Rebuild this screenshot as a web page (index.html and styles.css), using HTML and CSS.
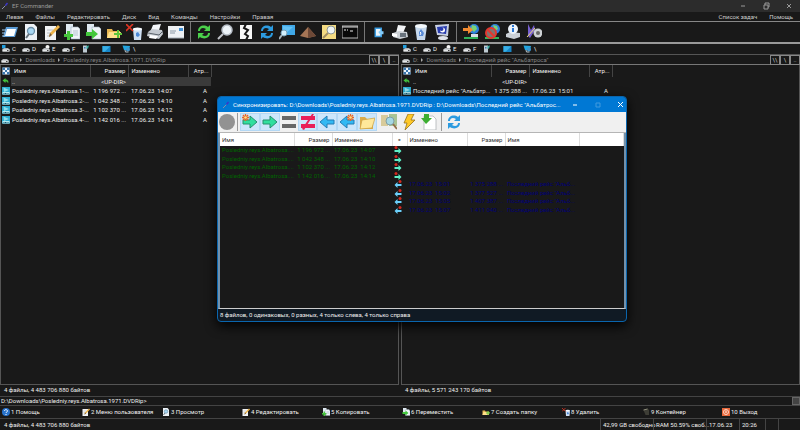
FILE: index.html
```html
<!DOCTYPE html>
<html lang="ru">
<head>
<meta charset="utf-8">
<title>EF Commander</title>
<link rel="stylesheet" href="styles.css">
</head>
<body>
<svg class="defs" aria-hidden="true">
  <symbol id="wand" viewBox="0 0 16 16"><path d="M2 14 9 7" stroke="#8a8fa8" stroke-width="2"/><path d="m9 7 4-5" stroke="#3b35c8" stroke-width="3"/></symbol>
  <symbol id="list" viewBox="0 0 16 16"><path d="M4 3h12l-3 10H1z" fill="#5b9bd5"/><path d="M5 5h9l-2 7H3z" fill="#fff"/><path d="M0 6h4M0 9h3M0 12h3" stroke="#9cc7ef"/></symbol>
  <symbol id="view" viewBox="0 0 16 16"><path d="M2 0h9l3 3v13H2z" fill="#edf2f7"/><circle cx="8" cy="7" r="3.5" fill="#a8d8f4" stroke="#6b8fa8" stroke-width="1.3"/><path d="m6 10-3 4" stroke="#68757f" stroke-width="2"/></symbol>
  <symbol id="edit" viewBox="0 0 16 16"><path d="M1 2h11v14H1z" fill="#f2f4f6"/><path d="M3 6h6M3 9h5M3 12h4" stroke="#b8bfc6"/><path d="m5 13 1-4 8-8 2 2-8 8z" fill="#edb44a"/><path d="m5 13 1-4 2 2z" fill="#72583a"/></symbol>
  <symbol id="copy" viewBox="0 0 16 16"><path d="M2 0h7v11H2z" fill="#dfe9f1"/><path d="M7 3h7l2 2v10H7z" fill="#eff4f8" stroke="#9fb0bf" stroke-width=".6"/><path d="M9 7h5M9 9h5M9 11h5" stroke="#b6c5d0"/><path d="M3 7h3v3h3v3H6v3H3v-3H0v-3h3z" fill="#46c43c"/></symbol>
  <symbol id="move" viewBox="0 0 16 16"><path d="M2 0h7v11H2z" fill="#dfe9f1"/><path d="M7 3h7l2 2v10H7z" fill="#eff4f8" stroke="#9fb0bf" stroke-width=".6"/><path d="M1 8h6V5l6 5-6 5v-3H1z" fill="#43c83c"/></symbol>
  <symbol id="newdir" viewBox="0 0 16 16"><path d="M1 5h5l1 2h7v7H1z" fill="#e8b651"/><path d="m1 14 2-6h12l-2 6z" fill="#ffe08a"/><path d="M11 6h2v3h3v2h-3v3h-2v-3H8V9h3z" fill="#5fc43c"/></symbol>
  <symbol id="del" viewBox="0 0 16 16"><path d="M7 5h9l-1 11H8z" fill="#cfe0f4"/><ellipse cx="11.500" cy="5" rx="4.500" ry="1.500" fill="#f7fbff"/><path d="m10 9 2-1 2 3-2 2-2-1z" fill="#4d8ad8"/><path d="m0 0 7 7M7 0 0 7" stroke="#dd3322" stroke-width="1.600"/></symbol>
  <symbol id="print" viewBox="0 0 16 16"><path d="m6 1 8-1-2 6H4z" fill="#f4f7fa"/><path d="m1 8 4-3 10 1 1 4-4 5L0 12z" fill="#c6cbd1"/><path d="m1 9 11 2 4-4" stroke="#5d646c" fill="none"/><path d="m3 11 8 1-2 3-7-1z" fill="#fff"/></symbol>
  <symbol id="mail" viewBox="0 0 16 16"><path d="M0 2h16v12H0z" fill="#eef1f4"/><path d="M2 7h6M2 9h5" stroke="#8d9aa6"/><path d="M11 4h4v3h-4z" fill="#4694d8"/><path d="M0 14h16" stroke="#a8b0b8"/></symbol>
  <symbol id="sync" viewBox="0 0 16 16"><path d="M2 7c0-5 6-7 10-4l2-2v6H8l2-2C7 3 4 4 4 7z"/><path d="M14 9c0 5-6 7-10 4l-2 2V9h6l-2 2c3 2 6 1 6-2z"/></symbol>
  <symbol id="find" viewBox="0 0 16 16"><circle cx="10" cy="6" r="5" fill="#edf3f8" stroke="#b7bec7" stroke-width="1.500"/><path d="m6 10-5 5" stroke="#c2c5ca" stroke-width="2"/></symbol>
  <symbol id="split" viewBox="0 0 16 16"><path d="M2 1h12v14H2z" fill="#f7f7f7"/><path d="m8 0-2 4 4 2-3 4 3 2-2 4" fill="none" stroke="#161616" stroke-width="2"/></symbol>
  <symbol id="screen" viewBox="0 0 16 16"><path d="M3 1h13v10H3z" fill="#40a8e8"/><path d="m4 2 10 1-8 7H4z" fill="#64c2f5"/><circle cx="5" cy="9" r="3" fill="#d4effb" stroke="#77a0b8"/><path d="m3 11-3 4" stroke="#a7b5be" stroke-width="2"/></symbol>
  <symbol id="pyramid" viewBox="0 0 16 16"><path d="m8 3 8 9-8 2-8-2z" fill="#a57555"/><path d="m8 3 8 9-8 2z" fill="#6d4937"/></symbol>
  <symbol id="note" viewBox="0 0 16 16"><path d="M1 1h14v14H1z" fill="#f4dc83"/><circle cx="10" cy="6" r="4" fill="#eff5f5" stroke="#8e9897"/><path d="m7 9-5 5" stroke="#a18f65" stroke-width="2"/></symbol>
  <symbol id="cmd" viewBox="0 0 16 16"><path d="M0 2h16v12H0z" fill="#090909" stroke="#b9b9b9"/><path d="M0 3h16" stroke="#ddd"/><path d="M2 6h2M5 6h1M8 7h3" stroke="#eee"/></symbol>
  <symbol id="door" viewBox="0 0 16 16"><path d="M2 2h10v13H2z" fill="#3b9de1"/><path d="M4 4h6v9H4z" fill="#e9f5fd"/><path d="m7 8 4-3v2h3v4h-3v2z" fill="#84cbf8"/></symbol>
  <symbol id="fax" viewBox="0 0 16 16"><path d="m6 1 8 1-3 7H4z" fill="#f3f5f7"/><path d="m1 9 6-2 8 1 1 5-8 2-7-2z" fill="#ccd1d6"/><path d="M8 9h6v4H8z" fill="#69737d"/><path d="m0 9 5 1v3l-5-1z" fill="#fff"/></symbol>
  <symbol id="bin" viewBox="0 0 16 16"><path d="M2 2h12l-2 14H4z" fill="#c6d9ee"/><ellipse cx="8" cy="2" rx="6" ry="2" fill="#f4f9fd"/><path d="m6 8 2-3 3 4-1 3H6z" fill="#588bd7"/><path d="m7 8 1 1-1 2" stroke="#fff" fill="none"/></symbol>
  <symbol id="monitor" viewBox="0 0 16 16"><path d="m1 1 14-1-1 12-11-1z" fill="#c9d1e3"/><path d="m3 3 10-1-1 8-8-1z" fill="#283cae"/><circle cx="8.500" cy="6" r="2.500" fill="#fff"/><circle cx="7.500" cy="5" r="2" fill="#283cae"/><ellipse cx="9" cy="14" rx="5" ry="2" fill="#dfe3eb"/></symbol>
  <symbol id="net" viewBox="0 0 16 16"><circle cx="11" cy="5" r="5" fill="#2d80dc"/><path d="m9 1 4 1 1 3-3 3-3-3z" fill="#79d276"/><path d="M8 10h7v3H8z" fill="#d8dee7"/><path d="M0 4h5V1l5 5-5 4V7H0z" fill="#f28b31"/><path d="M1 14h14" stroke="#32b45a" stroke-width="2"/></symbol>
  <symbol id="nonet" viewBox="0 0 16 16"><circle cx="11" cy="5" r="5" fill="#2d80dc"/><path d="m9 1 4 1 1 3-3 2z" fill="#79d276"/><path d="M1 14h14" stroke="#32b45a" stroke-width="2"/><circle cx="7" cy="9" r="5" fill="#81736f" stroke="#e4372e" stroke-width="2"/><path d="m4 6 6 6" stroke="#e4372e" stroke-width="2"/></symbol>
  <symbol id="info" viewBox="0 0 16 16"><path d="m1 10 4-2 10 1v4l-6 2-8-2z" fill="#cbd0d6"/><circle cx="8" cy="5" r="5" fill="#edf3fa"/><path d="M8 4v4M8 1v2" stroke="#2874cf" stroke-width="2"/></symbol>
  <symbol id="sound" viewBox="0 0 16 16"><path d="m2 0 3 6 3-5 1 5-5 8-2-2z" fill="#7860d2"/><path d="m1 13 8-9" stroke="#efdf75"/><circle cx="12" cy="9" r="4.500" fill="#cdd1d4"/><circle cx="12" cy="9" r="2" fill="#666"/></symbol>
  <symbol id="drive" viewBox="0 0 16 16"><path d="m1 9 3-3h8l3 3v4H1z" fill="#aeb2b5"/><path d="M1 9h14v4H1z" fill="#e5e7e8"/><path d="M10 11h3" stroke="#444" stroke-width="2"/></symbol>
  <symbol id="winflag" viewBox="0 0 16 16"><path d="M0 0h7v7H0z" fill="#229fdf"/></symbol>
  <symbol id="disc" viewBox="0 0 16 16"><circle cx="11" cy="4" r="4" fill="#f5f5f5"/></symbol>
  <symbol id="tools" viewBox="0 0 16 16"><path d="M2 1h8v14H2z" fill="#bfcbd2"/><path d="m9 2 5-1-2 6-3 1z" fill="#37ada0"/><path d="M4 4h3v3H4z" fill="#3978b4"/></symbol>
  <symbol id="desk" viewBox="0 0 16 16"><path d="M0 2h16v12H0z" fill="#1685c7"/><path d="m0 2 15 1-10 10-5 1z" fill="#39afe5"/></symbol>
  <symbol id="lan" viewBox="0 0 16 16"><path d="m0 1 15 1-2 9-10-1z" fill="#22a5df"/><circle cx="11" cy="9" r="4" fill="#3e94cb"/><path d="m5 10 1 4h6" stroke="#b5c0c7" stroke-width="2" fill="none"/></symbol>
  <symbol id="grid" viewBox="0 0 16 16"><path d="M1 1h14v14H1z" fill="#eaf3fc"/><path d="M1 1h5v5H1zM10 1h5v5h-5zM1 10h5v5H1zM10 10h5v5h-5zM6 6h4v4H6z" fill="#3c78ae"/></symbol>
  <symbol id="up" viewBox="0 0 16 16"><path d="m1 5 6-5v3c5 0 7 4 5 8-1-3-2-4-5-4v3z" fill="#43bf3d"/></symbol>
  <symbol id="video" viewBox="0 0 16 16"><path d="M0 0h16v15H0z" fill="#2cabd0"/><path d="m3 1 11 5-10 4z" fill="#8fdeeb"/><path d="M1 10h14v5H1z" fill="#b5ebf2"/><path d="M3 13h10" stroke="#155c78" stroke-width="2" stroke-dasharray="2 1"/></symbol>
  <symbol id="right" viewBox="0 0 16 16"><path d="M1 6h7V2l7 6-7 6v-4H1z" fill="#31df9e" stroke="#27906e"/></symbol>
  <symbol id="left" viewBox="0 0 16 16"><path d="M15 6H8V2L1 8l7 6v-4h7z" fill="#32b9f3" stroke="#237db6"/></symbol>
  <symbol id="star" viewBox="0 0 16 16"><path d="M4 0v8M0 4h8M1 1l6 6M7 1 1 7" stroke="#e96627" stroke-width="1.500"/><circle cx="4" cy="4" r="1.500" fill="#ffe183"/></symbol>
  <symbol id="goright" viewBox="0 0 16 16"><path d="M1 8h8V4l6 6-6 6v-4H1z" fill="#5ff0c8"/><circle cx="4" cy="3" r="3" fill="#d42a20"/></symbol>
  <symbol id="goleft" viewBox="0 0 16 16"><path d="M15 8H7V4l-6 6 6 6v-4h8z" fill="#6cd0fb"/><circle cx="12" cy="3" r="3" fill="#d42a20"/></symbol>
  <symbol id="equal" viewBox="0 0 16 16"><path d="M1 2h14v4H1zM1 10h14v4H1z" fill="#676767"/></symbol>
  <symbol id="unequal" viewBox="0 0 16 16"><path d="M1 2h14v4H1zM1 10h14v4H1zM2 15 12 0h2L4 16z" fill="#e91e58"/></symbol>
  <symbol id="folder" viewBox="0 0 16 16"><path d="M1 3h5l2 2h6v10H1z" fill="#dbac4c"/><path d="m3 6 13-2-3 10-12 1z" fill="#ffe89a" stroke="#c99d3e" stroke-width=".7"/></symbol>
  <symbol id="compare" viewBox="0 0 16 16"><path d="M0 1h7v11H0z" fill="#d8cb9b"/><path d="M8 0h8v12H8z" fill="#a9c495"/><circle cx="9" cy="7" r="4" fill="#a5d8e4" stroke="#809fa7"/><path d="m12 10 4 5" stroke="#93714b" stroke-width="2"/></symbol>
  <symbol id="bolt" viewBox="0 0 16 16"><path d="M7 0h6l-3 6h4L4 16l2-7H3z" fill="#ffc928" stroke="#94711c" stroke-width=".8"/></symbol>
  <symbol id="import" viewBox="0 0 16 16"><path d="M3 2h9l3 3v11H3z" fill="#fff" stroke="#aeb2b5" stroke-width=".8"/><path d="M3 0h5v4h3L5 10 0 4h3z" fill="#3cae31"/></symbol>
  <symbol id="help" viewBox="0 0 16 16"><circle cx="8" cy="8" r="8" fill="#2873cd"/><path d="M5 6c0-4 6-3 6 0 0 2-3 2-3 4M8 12v2" stroke="#fff" stroke-width="2" fill="none"/></symbol>
  <symbol id="box" viewBox="0 0 16 16"><path d="m3 4 8-3 3 3v10H7z" fill="#3e3e36"/><path d="m3 4 8-2" stroke="#8c8b79" stroke-width="2"/></symbol>
  <symbol id="power" viewBox="0 0 16 16"><path d="M0 0h16v16H0z" fill="#e7683b"/><circle cx="8" cy="8" r="5" stroke="#ffd5c6" stroke-width="2" fill="none"/><path d="M8 5v5" stroke="#fff" stroke-width="2"/></symbol>
</svg>

<header class="titlebar">
  <svg class="i8"><use href="#wand"/></svg><span>EF Commander</span>
  <div class="winbtns">
    <button aria-label="Свернуть"><svg viewBox="0 0 8 8"><path d="M2 4h4"/></svg></button>
    <button aria-label="Восстановить"><svg viewBox="0 0 8 8"><path d="M2 3h4v4H2zM3 3V1h4v4H6"/></svg></button>
    <button aria-label="Закрыть"><svg viewBox="0 0 8 8"><path d="m2 2 4 4M6 2 2 6"/></svg></button>
  </div>
</header>
<nav class="menu">
  <button>Левая</button><button>Файлы</button><button>Редактировать</button><button>Диск</button><button>Вид</button><button>Команды</button><button>Настройки</button><button>Правая</button>
  <button class="push">Список задач</button><button>Помощь</button>
</nav>
<div class="toolbar">
  <div class="group g9">
    <button aria-label="Список"><svg><use href="#list"/></svg></button><button aria-label="Просмотр"><svg><use href="#view"/></svg></button><button aria-label="Правка"><svg><use href="#edit"/></svg></button><button aria-label="Копировать"><svg><use href="#copy"/></svg></button><button aria-label="Переместить"><svg><use href="#move"/></svg></button><button aria-label="Создать папку"><svg><use href="#newdir"/></svg></button><button aria-label="Удалить"><svg><use href="#del"/></svg></button><button aria-label="Печать"><svg><use href="#print"/></svg></button><button aria-label="Почта"><svg><use href="#mail"/></svg></button>
  </div>
  <div class="group g8">
    <button aria-label="Обновить" class="green"><svg><use href="#sync"/></svg></button><button aria-label="Найти"><svg><use href="#find"/></svg></button><button aria-label="Разделить"><svg><use href="#split"/></svg></button><button aria-label="Синхронизировать" class="blue"><svg><use href="#sync"/></svg></button><button aria-label="Экран"><svg><use href="#screen"/></svg></button><button aria-label="Архив"><svg><use href="#pyramid"/></svg></button><button aria-label="Искать в файлах"><svg><use href="#note"/></svg></button><button aria-label="Командная строка"><svg><use href="#cmd"/></svg></button>
  </div>
  <div class="group g4">
    <button aria-label="Панель управления"><svg class="small"><use href="#door"/></svg></button><button aria-label="Принтеры"><svg><use href="#fax"/></svg></button><button aria-label="Корзина"><svg><use href="#bin"/></svg></button><button aria-label="Компьютер"><svg><use href="#monitor"/></svg></button>
  </div>
  <div class="group g4">
    <button aria-label="Подключить"><svg><use href="#net"/></svg></button><button aria-label="Отключить"><svg><use href="#nonet"/></svg></button><button aria-label="Сведения"><svg><use href="#info"/></svg></button><button aria-label="Звук"><svg><use href="#sound"/></svg></button>
  </div>
</div>

<main class="panels">
  <section class="panel">
    <div class="drives">
      <button><svg><use href="#winflag"/><use href="#drive"/></svg>C</button><button><svg><use href="#drive"/></svg>D</button><button><svg><use href="#disc"/><use href="#drive"/></svg>E</button><button><svg><use href="#drive"/></svg>F</button><button aria-label="Инструменты"><svg><use href="#tools"/></svg></button><button aria-label="Рабочий стол"><svg class="wide"><use href="#desk"/></svg></button><button><svg class="wide"><use href="#lan"/></svg>\</button>
    </div>
    <div class="path">
      <svg><use href="#drive"/></svg><a href="#">D:</a><i></i><a href="#">Downloads</a><i></i><a href="#">Posledniy.reys.Albatrosa.1971.DVDRip</a>
      <div class="nav"><button>\\</button><button>\</button><button>..</button></div>
    </div>
    <div class="list">
      <table class="files">
        <colgroup><col class="c-icon"><col class="c-name"><col class="c-size"><col class="c-date"><col class="c-attr"></colgroup>
        <thead><tr><th><svg><use href="#grid"/></svg></th><th class="hname">Имя</th><th class="num">Размер</th><th>Изменено</th><th class="num">Атр...</th></tr></thead>
        <tbody>
          <tr class="current"><td><svg><use href="#up"/></svg></td><td>..</td><td class="num">&lt;UP-DIR&gt;</td><td></td><td></td></tr>
          <tr><td><svg><use href="#video"/></svg></td><td>Posledniy.reys.Albatrosa.1-...</td><td class="num">1 196 972 ...</td><td>17.06.23&nbsp; 14:07</td><td class="num">A</td></tr>
          <tr><td><svg><use href="#video"/></svg></td><td>Posledniy.reys.Albatrosa.2-...</td><td class="num">1 042 348 ...</td><td>17.06.23&nbsp; 14:10</td><td class="num">A</td></tr>
          <tr><td><svg><use href="#video"/></svg></td><td>Posledniy.reys.Albatrosa.3-...</td><td class="num">1 102 370 ...</td><td>17.06.23&nbsp; 14:12</td><td class="num">A</td></tr>
          <tr><td><svg><use href="#video"/></svg></td><td>Posledniy.reys.Albatrosa.4-...</td><td class="num">1 142 016 ...</td><td>17.06.23&nbsp; 14:14</td><td class="num">A</td></tr>
        </tbody>
      </table>
    </div>
    <p class="summary">4 файлы, 4 483 706 880 байтов</p>
  </section>
  <section class="panel">
    <div class="drives">
      <button><svg><use href="#winflag"/><use href="#drive"/></svg>C</button><button><svg><use href="#drive"/></svg>D</button><button><svg><use href="#disc"/><use href="#drive"/></svg>E</button><button><svg><use href="#drive"/></svg>F</button><button aria-label="Инструменты"><svg><use href="#tools"/></svg></button><button aria-label="Рабочий стол"><svg class="wide"><use href="#desk"/></svg></button><button><svg class="wide"><use href="#lan"/></svg>\</button>
    </div>
    <div class="path">
      <svg><use href="#drive"/></svg><a href="#">D:</a><i></i><a href="#">Downloads</a><i></i><a href="#">Последний рейс "Альбатроса"</a>
      <div class="nav"><button>\\</button><button>\</button><button>..</button></div>
    </div>
    <div class="list">
      <table class="files">
        <colgroup><col class="c-icon"><col class="c-name"><col class="c-size"><col class="c-date"><col class="c-attr"></colgroup>
        <thead><tr><th><svg><use href="#grid"/></svg></th><th class="hname">Имя</th><th class="num">Размер</th><th>Изменено</th><th class="num">Атр...</th></tr></thead>
        <tbody>
          <tr><td><svg><use href="#up"/></svg></td><td>..</td><td class="num">&lt;UP-DIR&gt;</td><td></td><td></td></tr>
          <tr><td><svg><use href="#video"/></svg></td><td>Последний рейс "Альбатр...</td><td class="num">1 375 288 ...</td><td>17.06.23&nbsp; 15:01</td><td class="num">A</td></tr>
        </tbody>
      </table>
    </div>
    <p class="summary">4 файлы, 5 571 243 170 байтов</p>
  </section>
</main>

<label class="command"><span>D:\Downloads\Posledniy.reys.Albatrosa.1971.DVDRip&gt;</span><input type="text" aria-label="Команда"><button aria-label="История"></button></label>
<div class="fkeys">
  <button><svg><use href="#help"/></svg>1 Помощь</button><button><svg><use href="#edit"/></svg>2 Меню пользователя</button><button><svg><use href="#view"/></svg>3 Просмотр</button><button><svg><use href="#edit"/></svg>4 Редактировать</button><button><svg><use href="#copy"/></svg>5 Копировать</button><button><svg><use href="#move"/></svg>6 Переместить</button><button><svg><use href="#newdir"/></svg>7 Создать папку</button><button><svg><use href="#del"/></svg>8 Удалить</button><button><svg><use href="#box"/></svg>9 Контейнер</button><button><svg><use href="#power"/></svg>10 Выход</button>
</div>
<footer class="status"><span>4 файлы, 4 483 706 880 байтов</span><span>42,99 GB свободно</span><span>RAM 50.59% своб...</span><span>17.06.23</span><span>20:26</span><span></span><span></span></footer>

<div class="dialog" role="dialog" aria-label="Синхронизировать">
  <div class="dtitle"><svg class="i8"><use href="#wand"/></svg><span>Синхронизировать: D:\Downloads\Posledniy.reys.Albatrosa.1971.DVDRip : D:\Downloads\Последний рейс "Альбатрос...</span>
    <div class="winbtns">
      <button aria-label="Свернуть"><svg viewBox="0 0 8 8"><path d="M2 4h4"/></svg></button>
      <button aria-label="Развернуть" disabled><svg viewBox="0 0 8 8"><path d="M2 2h4v4H2z"/></svg></button>
      <button aria-label="Закрыть"><svg viewBox="0 0 8 8"><path d="m1 1 5 5M6 1 1 6"/></svg></button>
    </div>
  </div>
  <div class="dtools">
    <button class="stop" aria-label="Стоп"></button><hr>
    <div class="toggles">
      <button class="on" aria-label="Новые слева"><svg><use href="#right"/><use href="#star" width="14" height="14"/></svg></button><button class="on" aria-label="Слева"><svg><use href="#right"/></svg></button><button aria-label="Одинаковые"><svg><use href="#equal"/></svg></button><button class="on" aria-label="Разные"><svg><use href="#unequal"/></svg></button><button class="on" aria-label="Справа"><svg><use href="#left"/></svg></button><button class="on" aria-label="Новые справа"><svg><use href="#left"/><use href="#star" x="8" width="14" height="14"/></svg></button><button class="on" aria-label="Папки"><svg><use href="#folder"/></svg></button>
    </div>
    <button class="gap" aria-label="Сравнить"><svg><use href="#compare"/></svg></button><button aria-label="Выполнить"><svg><use href="#bolt"/></svg></button><button aria-label="Загрузить"><svg><use href="#import"/></svg></button><hr>
    <button class="blue" aria-label="Обновить"><svg><use href="#sync"/></svg></button>
  </div>
  <div class="dlist">
    <table class="sync">
      <colgroup><col class="s-name"><col class="s-size"><col class="s-date"><col class="s-dir"><col class="s-date2"><col class="s-size"><col class="s-name2"><col></colgroup>
      <thead><tr><th>Имя</th><th class="num">Размер</th><th>Изменено</th><th class="mid">■</th><th>Изменено</th><th class="num">Размер</th><th>Имя</th><th></th></tr></thead>
      <tbody>
        <tr class="l"><td>Posledniy.reys.Albatrosa....</td><td class="num">1 196 972 ...</td><td>17.06.23&nbsp; 14:07</td><td><svg><use href="#goright"/></svg></td><td></td><td></td><td></td><td></td></tr>
        <tr class="l"><td>Posledniy.reys.Albatrosa....</td><td class="num">1 042 348 ...</td><td>17.06.23&nbsp; 14:10</td><td><svg><use href="#goright"/></svg></td><td></td><td></td><td></td><td></td></tr>
        <tr class="l"><td>Posledniy.reys.Albatrosa....</td><td class="num">1 102 370 ...</td><td>17.06.23&nbsp; 14:12</td><td><svg><use href="#goright"/></svg></td><td></td><td></td><td></td><td></td></tr>
        <tr class="l"><td>Posledniy.reys.Albatrosa....</td><td class="num">1 142 016 ...</td><td>17.06.23&nbsp; 14:14</td><td><svg><use href="#goright"/></svg></td><td></td><td></td><td></td><td></td></tr>
        <tr class="r"><td></td><td></td><td></td><td><svg><use href="#goleft"/></svg></td><td>17.06.23&nbsp; 15:01</td><td class="num">1 375 288 ...</td><td>Последний рейс "Альб...</td><td></td></tr>
        <tr class="r"><td></td><td></td><td></td><td><svg><use href="#goleft"/></svg></td><td>17.06.23&nbsp; 15:02</td><td class="num">1 377 527 ...</td><td>Последний рейс "Альб...</td><td></td></tr>
        <tr class="r"><td></td><td></td><td></td><td><svg><use href="#goleft"/></svg></td><td>17.06.23&nbsp; 15:05</td><td class="num">1 407 387 ...</td><td>Последний рейс "Альб...</td><td></td></tr>
        <tr class="r"><td></td><td></td><td></td><td><svg><use href="#goleft"/></svg></td><td>17.06.23&nbsp; 15:07</td><td class="num">1 411 040 ...</td><td>Последний рейс "Альб...</td><td></td></tr>
      </tbody>
    </table>
  </div>
  <p class="dstatus">8 файлов, 0 одинаковых, 0 разных, 4 только слева, 4 только справа</p>
</div>
</body>
</html>
```

FILE: styles.css
```css
* { box-sizing: border-box; }
body {
  margin: 0;
  height: 100vh;
  display: flex;
  flex-direction: column;
  overflow: hidden;
  background: #191919;
  color: #f0f0f0;
  font: 6px/8px Roboto, "Noto Sans", sans-serif;
}
button, input { font: inherit; color: inherit; background: none; border: 0; padding: 0; margin: 0; white-space: nowrap; }
a { color: inherit; text-decoration: none; }
p { margin: 0; }
svg { display: block; flex: none; }
.defs { display: none; }
.i8 { width: 8px; height: 8px; }

.titlebar { display: flex; align-items: center; gap: 3px; height: 12px; padding-left: 1px; background: #2c2c2c; color: #999; }
.winbtns { display: flex; margin-left: auto; }
.winbtns button { width: 23px; height: 10px; display: grid; place-items: center; }
.winbtns svg { width: 8px; height: 8px; fill: none; stroke: currentColor; stroke-width: 1; }
.winbtns button:disabled { opacity: .25; }

.menu { display: flex; gap: 12px; height: 10px; padding: 0 7px 0 6px; color: #ccc; border-bottom: 1px solid #888; align-items: center; }
.push { margin-left: auto; }

.toolbar { display: flex; height: 22px; border-bottom: 2px solid #999; align-items: center; }
.group { display: flex; height: 20px; border-right: 1px solid #777; margin-right: 3px; padding-right: 4px; }
.group:last-child { border: 0; }
.group button { flex: 1; display: grid; place-items: center; }
.group svg, .dtools svg { width: 16px; height: 16px; }
.group svg.small { width: 12px; height: 12px; }
.g9 { width: 191px; }
.g8 { width: 171px; }
.g4 { width: 89px; }
.green { fill: #4ad04a; }
.blue { fill: #2c9be0; }

.panels { flex: 1; min-height: 0; display: flex; gap: 2px; }
.panel { flex: 1; min-width: 0; display: flex; flex-direction: column; }
.drives { display: flex; height: 10px; align-items: center; padding-left: 2px; }
.drives button { display: flex; align-items: center; gap: 2px; width: 20px; }
.drives svg, .path svg { width: 8px; height: 8px; }
.drives .wide { width: 9px; }
.path { display: flex; align-items: center; height: 11px; gap: 3px; padding-left: 1px; border-top: 1px solid #555; border-bottom: 1px solid #777; color: #858585; }
.path i { border: 2px solid transparent; border-left: 2px solid #aaa; border-right: 0; }
.nav { display: flex; margin-left: auto; }
.nav button { width: 10px; height: 10px; border: 1px solid #888; line-height: 7px; color: #ccc; }
.list { flex: 1; min-height: 0; border: 1px solid #555; border-top: 0; }

table { border-collapse: collapse; table-layout: fixed; }
th, td { padding: 0 2px 0 1px; text-align: left; font-weight: 400; white-space: nowrap; overflow: hidden; }
.files { width: 210px; }
.files th { height: 12px; padding-left: 3px; }
.files th:nth-child(n+2) { border-right: 1px solid #444; }
.files td { height: 9px; }
.files tr:nth-child(even) td { height: 10px; }
.files td:nth-child(4) { padding-left: 3px; }
.files svg { width: 8px; height: 8px; margin-left: 1px; }
.files th:first-child, .files td:first-child { padding: 0; }
.files td.num:last-child { padding-right: 4px; }
.files .current td:nth-child(n+2) { background: #3a3a3a; }
.num, th.num { text-align: right; }
.c-icon { width: 10px; }
.c-name { width: 79px; }
.c-size { width: 38px; }
.c-date { width: 60px; }
.c-attr { width: 23px; }
.summary { height: 11px; line-height: 10px; padding-left: 4px; }

.command { display: flex; align-items: center; height: 9px; border-top: 1px solid #444; padding-left: 1px; }
.command input { flex: 1; min-width: 0; height: 8px; outline: 0; }
.command button { width: 8px; height: 8px; background: #444; border: 1px solid #666; }
.fkeys { display: grid; grid-template-columns: repeat(10, 1fr); height: 13px; border-top: 1px solid #444; }
.fkeys button { display: flex; align-items: center; gap: 1px; padding-left: 2px; }
.fkeys svg { width: 8px; height: 8px; }
.status { display: grid; grid-template-columns: 1fr 53px 53px 33px 26px 13px 22px; height: 12px; border-top: 1px solid #444; align-items: stretch; line-height: 11px; white-space: nowrap; }
.status span { padding-left: 2px; border-left: 1px solid #444; }
.status span:first-child { border: 0; padding-left: 4px; }

.dialog { position: absolute; left: 217px; top: 96px; width: 410px; height: 226px; display: flex; flex-direction: column; border: 1px solid #0a65ad; border-radius: 4px; overflow: hidden; background: #101a24; box-shadow: 0 4px 12px #000; }
.dtitle { display: flex; align-items: center; gap: 3px; height: 15px; padding-left: 4px; background: #0078d4; color: #fff; white-space: nowrap; }
.dtools { display: flex; align-items: center; height: 21px; padding-left: 1px; background: #f0f0f0; border-bottom: 1px solid #b5b5b5; }
.dtools button { width: 20px; height: 18px; display: grid; place-items: center; }
.dtools .toggles { display: flex; width: 137px; }
.dtools .toggles button { flex: 1; width: auto; min-width: 0; }
.dtools .on { background: #cce6fb; border: 1px solid #b3d8f5; }
.dtools .gap { margin-left: 2px; }
.dtools .stop { width: 16px; height: 16px; border-radius: 50%; background: #929292; }
.dtools hr { width: 1px; height: 18px; margin: 0 2px; border: 0; background: #999; }
.dlist { flex: 1; min-height: 0; background: #191919; border: 2px solid #7391ab; border-top: 0; border-bottom: 1px solid #ccc; }
.sync { width: 100%; }
.sync th { height: 13px; padding: 0 2px; background: #fff; color: #333; border-right: 1px solid #ddd; }
.sync td { height: 8px; line-height: 8px; padding: 0 2px; }
.sync tr:nth-child(even) td { height: 9px; }
.sync .mid { padding: 0; text-align: center; color: #777; font-size: 4px; }
.sync svg { width: 8px; height: 8px; }
.s-name { width: 74px; }
.s-size { width: 38px; }
.s-date { width: 60px; }
.s-dir { width: 15px; }
.s-date2 { width: 60px; }
.s-name2 { width: 74px; }
.l { color: #006400; }
.r { color: #000078; }
.dstatus { height: 12px; line-height: 11px; padding-left: 2px; }
```
